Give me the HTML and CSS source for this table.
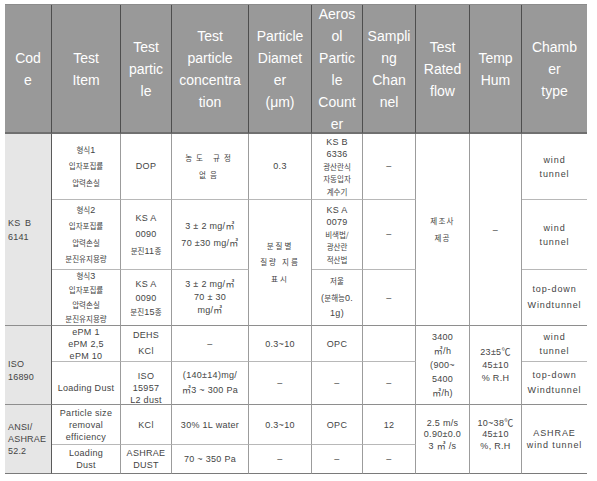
FILE: index.html
```html
<!DOCTYPE html>
<html lang="ko">
<head>
<meta charset="utf-8">
<title>Test standards</title>
<link rel="stylesheet" href="styles.css">
</head>
<body>
<div class="table">
  <div class="h"><div class="t">Cod<br>e</div></div>
  <div class="h"><div class="t">Test<br>Item</div></div>
  <div class="h"><div class="t">Test<br>partic<br>le</div></div>
  <div class="h"><div class="t">Test<br>particle<br>concentra<br>tion</div></div>
  <div class="h"><div class="t">Particle<br>Diamet<br>er<br>(μm)</div></div>
  <div class="h"><div class="t">Aeros<br>ol<br>Partic<br>le<br>Count<br>er</div></div>
  <div class="h"><div class="t">Sampli<br>ng<br>Chan<br>nel</div></div>
  <div class="h"><div class="t">Test<br>Rated<br>flow</div></div>
  <div class="h"><div class="t">Temp<br>Hum</div></div>
  <div class="h last"><div class="t">Chamb<br>er<br>type</div></div>

  <!-- row 1 -->
  <div class="c code s3 lh-m gb"><div class="t">KS B<br>6141</div></div>
  <div class="c lh-xl"><div class="t"><span class="k">형식</span>1<br><span class="k">입자포집률</span><br><span class="k">압력손실</span></div></div>
  <div class="c lh-xl"><div class="t">DOP</div></div>
  <div class="c lh-xl"><div class="t"><span class="k wide">농도 규정<br>없음</span></div></div>
  <div class="c lh-xl"><div class="t">0.3</div></div>
  <div class="c lh-a"><div class="t">KS B<br>6336<br><span class="k">광산란식<br>자동입자<br>계수기</span></div></div>
  <div class="c lh-xl"><div class="t">–</div></div>
  <div class="c s3 lh-l gb"><div class="t"><span class="k sp">제조사<br>제공</span></div></div>
  <div class="c s3 gb"><div class="t">–</div></div>
  <div class="c ch lh-m"><div class="t">wind<br>tunnel</div></div>

  <!-- row 2 -->
  <div class="c lh-xl"><div class="t"><span class="k">형식</span>2<br><span class="k">입자포집률</span><br><span class="k">압력손실</span><br><span class="k">분진유지용량</span></div></div>
  <div class="c lh-xl"><div class="t">KS A<br>0090<br><span class="k">분진</span>11<span class="k">종</span></div></div>
  <div class="c lh-xl"><div class="t">3 ± 2 mg/㎥<br>70 ±30 mg/㎥</div></div>
  <div class="c s2 lh-xl gb"><div class="t"><span class="k mid">분질별<br>질량 지름<br>표시</span></div></div>
  <div class="c lh-b"><div class="t">KS A<br>0079<br><span class="k">비색법/<br>광산란<br>적산법</span></div></div>
  <div class="c lh-xl"><div class="t">–</div></div>
  <div class="c ch lh-m"><div class="t">wind<br>tunnel</div></div>

  <!-- row 3 -->
  <div class="c lh-ml gb"><div class="t"><span class="k">형식</span>3<br><span class="k">입자포집률</span><br><span class="k">압력손실</span><br><span class="k">분진유지용량</span></div></div>
  <div class="c lh-m gb"><div class="t">KS A<br>0090<br><span class="k">분진</span>15<span class="k">종</span></div></div>
  <div class="c lh-s gb"><div class="t">3 ± 2 mg/㎥<br>70 ± 30<br>mg/㎥</div></div>
  <div class="c lh-l gb"><div class="t"><span class="k">저울</span><br>(<span class="k">분해능</span>0.<br>1g)</div></div>
  <div class="c gb"><div class="t">–</div></div>
  <div class="c ch lh-l gb"><div class="t">top-down<br>Windtunnel</div></div>

  <!-- row 4 -->
  <div class="c code s2 lh-s iso gb"><div class="t">ISO<br>16890</div></div>
  <div class="c lh-xs"><div class="t">ePM 1<br>ePM 2,5<br>ePM 10</div></div>
  <div class="c lh-l"><div class="t">DEHS<br>KCl</div></div>
  <div class="c"><div class="t">–</div></div>
  <div class="c"><div class="t">0.3~10</div></div>
  <div class="c"><div class="t">OPC</div></div>
  <div class="c"></div>
  <div class="c s2 lh-m gb"><div class="t">3400<br>㎥/h<br>(900~<br>5400<br>㎥/h)</div></div>
  <div class="c s2 lh-s gb"><div class="t">23±5℃<br>45±10<br>% R.H</div></div>
  <div class="c ch lh-m"><div class="t">wind<br>tunnel</div></div>

  <!-- row 5 -->
  <div class="c gb down"><div class="t">Loading Dust</div></div>
  <div class="c lh-xs gb down"><div class="t">ISO<br>15957<br>L2 dust</div></div>
  <div class="c lh-l gb"><div class="t">(140±14)mg/<br>㎥3 ~ 300 Pa</div></div>
  <div class="c gb"><div class="t">–</div></div>
  <div class="c gb"><div class="t">–</div></div>
  <div class="c gb"><div class="t">–</div></div>
  <div class="c ch lh-l gb"><div class="t">top-down<br>Windtunnel</div></div>

  <!-- row 6 -->
  <div class="c code s2 lh-xs bottom"><div class="t">ANSI/<br>ASHRAE<br>52.2</div></div>
  <div class="c lh-xs"><div class="t">Particle size<br>removal<br>efficiency</div></div>
  <div class="c"><div class="t">KCl</div></div>
  <div class="c"><div class="t">30% 1L water</div></div>
  <div class="c"><div class="t">0.3~10</div></div>
  <div class="c"><div class="t">OPC</div></div>
  <div class="c"><div class="t">12</div></div>
  <div class="c s2 lh-xxs bottom up"><div class="t">2.5 m/s<br>0.90±0.0<br>3 ㎥ /s</div></div>
  <div class="c s2 lh-xxs bottom up"><div class="t">10~38℃<br>45±10<br>%, R.H</div></div>
  <div class="c ch s2 lh-xs bottom"><div class="t">ASHRAE<br>wind tunnel</div></div>

  <!-- row 7 -->
  <div class="c lh-xs bottom"><div class="t">Loading<br>Dust</div></div>
  <div class="c lh-xs bottom"><div class="t">ASHRAE<br>DUST</div></div>
  <div class="c bottom"><div class="t">70 ~ 350 Pa</div></div>
  <div class="c bottom"><div class="t">–</div></div>
  <div class="c bottom"><div class="t">–</div></div>
  <div class="c bottom"><div class="t">–</div></div>
</div>
</body>
</html>
```

FILE: styles.css
```css
html, body {
  margin: 0;
  padding: 0;
  background: #ffffff;
}

body {
  font-family: "Liberation Sans", "Noto Sans CJK KR", "DejaVu Sans", sans-serif;
}

.table {
  display: grid;
  grid-template-columns: 47px 69px 51px 77px 63px 51px 53px 54px 52px 65px;
  grid-template-rows: 129px 66px 70px 56px 36px 43px 40px 29px;
  width: 582px;
  margin: 4px 0 0 5px;
  border-top: 1px solid #8c8c8c;
}

.t {
  white-space: nowrap;
}

.h {
  display: flex;
  align-items: center;
  justify-content: center;
  text-align: center;
  box-sizing: border-box;
  background: #999999;
  color: #ffffff;
  font-size: 14px;
  line-height: 22px;
  border-right: 1px solid #4e4e4e;
  border-bottom: 2px solid #707070;
  min-height: 0;
}

.h.last {
  border-right: none;
}

.c {
  display: flex;
  align-items: center;
  justify-content: center;
  text-align: center;
  box-sizing: border-box;
  font-size: 9px;
  line-height: 14px;
  letter-spacing: 0.3px;
  color: #444444;
  border-right: 1px solid #9c9c9c;
  border-bottom: 1px solid #b8b8b8;
  min-height: 0;
  min-width: 0;
}

.c.ch {
  border-right: none;
  letter-spacing: 0.9px;
}

.code {
  justify-content: flex-start;
  text-align: left;
  padding-left: 3px;
  background: #e6e6e6;
  border-right: 1px solid #5a5a5a;
  letter-spacing: 0.2px;
  word-spacing: 2px;
}

.iso {
  padding-top: 12px;
}

.gb {
  border-bottom-color: #8e8e8e;
}

.bottom {
  border-bottom-color: #7a7a7a;
}

.down {
  padding-top: 10px;
}

.up {
  padding-bottom: 8px;
}

.s2 {
  grid-row: span 2;
}

.s3 {
  grid-row: span 3;
}

.lh-xl { line-height: 16.5px; }
.lh-l { line-height: 15.5px; }
.lh-a { line-height: 12.6px; padding-top: 1px; }
.lh-b { line-height: 12.4px; padding-top: 1px; }
.lh-ml { line-height: 14.5px; }
.lh-m { line-height: 14px; }
.lh-s { line-height: 13px; }
.lh-xs { line-height: 12px; }
.lh-xxs { line-height: 11.5px; }

.k {
  font-family: "Noto Sans CJK KR", sans-serif;
  font-size: 7.5px;
  letter-spacing: 0;
}

.k.sp {
  letter-spacing: 1.2px;
}

.k.mid {
  letter-spacing: 2px;
}

.k.wide {
  letter-spacing: 4px;
}
```
